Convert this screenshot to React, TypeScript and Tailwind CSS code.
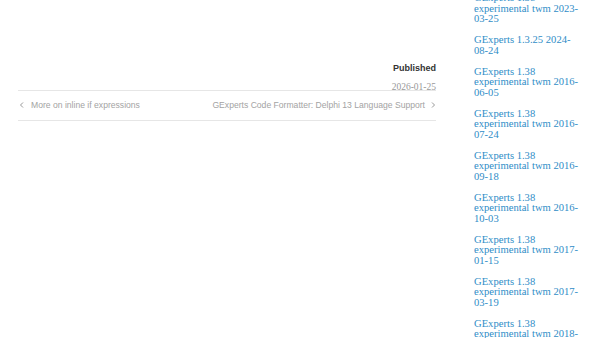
import React from "react";

const links: string[][] = [
  ["GExperts 1.38", "experimental twm 2023-", "03-25"],
  ["GExperts 1.3.25 2024-", "08-24"],
  ["GExperts 1.38", "experimental twm 2016-", "06-05"],
  ["GExperts 1.38", "experimental twm 2016-", "07-24"],
  ["GExperts 1.38", "experimental twm 2016-", "09-18"],
  ["GExperts 1.38", "experimental twm 2016-", "10-03"],
  ["GExperts 1.38", "experimental twm 2017-", "01-15"],
  ["GExperts 1.38", "experimental twm 2017-", "03-19"],
  ["GExperts 1.38", "experimental twm 2018-", "04-08"],
];

const Chevron = ({ dir }: { dir: "left" | "right" }) => (
  <svg width="6" height="8" viewBox="0 0 6 8" className="shrink-0">
    <path
      d={dir === "left" ? "M4 1.5 L1.5 4 L4 6.5" : "M2 1.5 L4.5 4 L2 6.5"}
      fill="none"
      stroke="#999"
      strokeWidth="1"
    />
  </svg>
);

export default function App() {
  return (
    <div className="w-[600px] h-[338px] overflow-hidden bg-white flex">
      <main className="w-[418px] ml-[18px] pt-[62px] font-['Liberation_Sans',sans-serif]">
        <div className="flex flex-col items-end">
          <span className="text-[9px] font-bold text-[#333] leading-[12px]">Published</span>
          <span className="mt-[8px] text-[9.5px] text-[#999] leading-[11px] font-['Liberation_Serif',serif]">
            2026-01-25
          </span>
        </div>
        <nav className="mt-[-3px] border-t border-b border-[#e6e6e6] h-[31px] flex items-center justify-between text-[8.6px] text-[#a3a3a3]">
          <a className="flex items-center gap-[6px] pl-[1px]">
            <Chevron dir="left" />
            <span>More on inline if expressions</span>
          </a>
          <a className="flex items-center gap-[5px]">
            <span>GExperts Code Formatter: Delphi 13 Language Support</span>
            <Chevron dir="right" />
          </a>
        </nav>
      </main>
      <aside className="ml-[38px] w-[120px] mt-[-7px] font-['Liberation_Serif',serif] text-[10.6px] leading-[10.5px] text-[#2f8dc7]">
        <ul className="flex flex-col gap-[10.5px]">
          {links.map((lines, i) => (
            <li key={i}>
              <a className="flex flex-col">
                {lines.map((l, j) => (
                  <span key={j} className="whitespace-nowrap">{l}</span>
                ))}
              </a>
            </li>
          ))}
        </ul>
      </aside>
    </div>
  );
}
